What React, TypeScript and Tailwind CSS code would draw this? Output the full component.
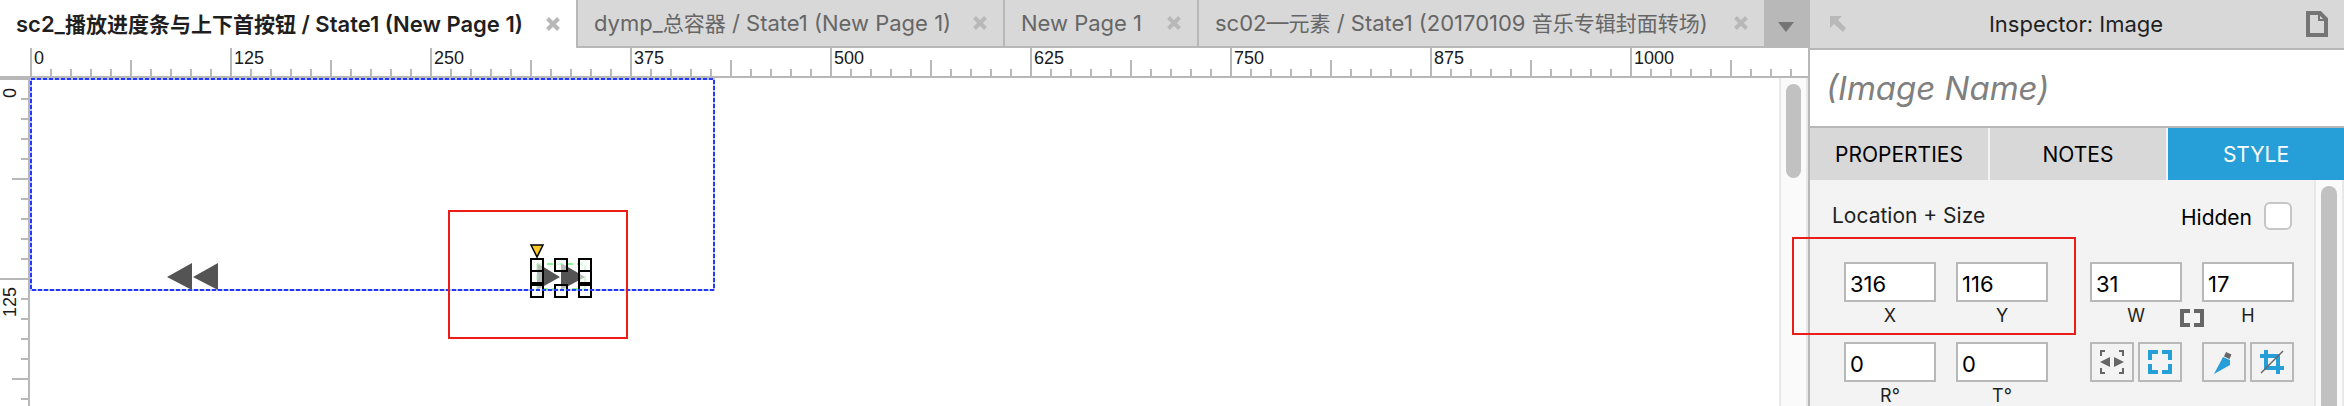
import { useState } from 'react';

const MINOR = 20;
const H_TICKS = Array.from({ length: 89 }, (_, i) => i);
const V_TICKS = Array.from({ length: 17 }, (_, i) => i);

const PAGES = [
  { title: 'sc2_播放进度条与上下首按钮 / State1 (New Page 1)', width: 'w-[576px]' },
  { title: 'dymp_总容器 / State1 (New Page 1)', width: 'w-[427px]' },
  { title: 'New Page 1', width: 'w-[194px]' },
  { title: 'sc02—元素 / State1 (20170109 音乐专辑封面转场)', width: 'w-[567px]' },
];

const INSPECTOR_TABS = ['PROPERTIES', 'NOTES', 'STYLE'];

function CloseIcon() {
  return (
    <svg width="14" height="14" viewBox="0 0 14 14" stroke="#b8b8b8" strokeWidth="4">
      <path d="M1.5 1.5 12.5 12.5M12.5 1.5 1.5 12.5" />
    </svg>
  );
}

// Chinese runs are set one step smaller than the Latin text around them
function MixedText({ text }: { text: string }) {
  return text.split(/([\u4e00-\u9fff]+)/).map((part, i) =>
    i % 2 === 1 ? (
      <span key={i} className="text-[21px]">
        {part}
      </span>
    ) : (
      part
    ),
  );
}

function PageTabs() {
  const [active, setActive] = useState(0);

  return (
    <div className="flex h-12 bg-[#b8b8b8]">
      {PAGES.map((page, i) => (
        <div
          key={page.title}
          className={`flex min-w-0 items-center justify-between pr-4 pl-4 ${page.width} ${
            i === active
              ? 'bg-white font-semibold text-[#1f1f1f]'
              : 'border-b-2 border-l-2 border-[#b8b8b8] bg-[#d8d8d8] text-[#666666]'
          }`}
        >
          <button type="button" className="truncate text-[22px] leading-8" onClick={() => setActive(i)}>
            <MixedText text={page.title} />
          </button>
          <button type="button" aria-label={`Close ${page.title}`} className="shrink-0">
            <CloseIcon />
          </button>
        </div>
      ))}
      <button type="button" aria-label="All pages" className="flex flex-1 items-center justify-center pt-1.5">
        <svg width="16" height="10" viewBox="0 0 16 10">
          <path d="M0 0h16L8 10z" fill="#757575" />
        </svg>
      </button>
    </div>
  );
}

function tickSize(i: number) {
  if (i % 10 === 0) return 28;
  return i % 5 === 0 ? 16 : 7;
}

function TopRuler() {
  return (
    <div className="h-[30px] overflow-hidden border-b-2 border-[#b8b8b8]">
      <svg width="100%" height="28" className="block">
        {H_TICKS.map((i) => (
          <g key={i}>
            <rect x={30 + i * MINOR} y={28 - tickSize(i)} width="2" height={tickSize(i)} fill="#b8b8b8" />
            {i % 10 === 0 && (
              <text x={34 + i * MINOR} y="16" fontSize="18" fill="#1a1a1a">
                {i * 12.5}
              </text>
            )}
          </g>
        ))}
      </svg>
    </div>
  );
}

function SideRuler() {
  return (
    <div className="w-[30px] shrink-0 overflow-hidden border-r-2 border-[#b8b8b8]">
      <svg width="28" height="328" className="block">
        {V_TICKS.map((i) => (
          <g key={i}>
            <rect x={28 - tickSize(i)} y={i * MINOR} width={tickSize(i)} height="2" fill="#b8b8b8" />
            {i % 10 === 0 && (
              <text
                transform={`translate(16 ${i === 0 ? 20 : i * MINOR + 39}) rotate(-90)`}
                fontSize="18"
                fill="#1a1a1a"
              >
                {i * 12.5}
              </text>
            )}
          </g>
        ))}
      </svg>
    </div>
  );
}

function Canvas() {
  return (
    <div className="min-w-0 flex-1 overflow-hidden">
      <svg width="760" height="328" className="block">
        <rect x="1" y="1" width="683" height="211" fill="none" stroke="#b9c0fb" strokeWidth="2" />
        <rect x="1" y="1" width="683" height="211" fill="none" stroke="#2438f8" strokeWidth="2" strokeDasharray="4 2" />
        <path d="M137 199 162 185V212zM163 199 188 185V212z" fill="#545454" />

        {/* selected widget */}
        <path d="M507 185 530 199 507 212z M531 185 555 199 531 212z" fill="#545454" />
        <rect x="507" y="186" width="48" height="25" fill="none" stroke="#1fe82c" strokeDasharray="6 4" />
        <path d="M501 167h12l-6 12z" fill="#fbc926" stroke="#000" strokeWidth="1.5" />
        <g fill="#fff" fillOpacity="0.6" stroke="#000" strokeWidth="2">
          {[501, 525, 549].map((x) => (
            <g key={x}>
              <rect x={x} y="181" width="12" height="12" />
              {x !== 525 && <rect x={x} y="193" width="12" height="12" />}
              <rect x={x} y="207" width="12" height="12" />
            </g>
          ))}
        </g>
        <path d="M500 212H562" stroke="#2438f8" strokeWidth="2" strokeDasharray="4 2" />
        <rect x="419" y="133" width="178" height="127" fill="none" stroke="#ec1c16" strokeWidth="2" />
      </svg>
    </div>
  );
}

function NumberField({ id, label, initial }: { id: string; label: string; initial: string }) {
  const [value, setValue] = useState(initial);

  return (
    <div className="flex w-[92px] flex-col items-center">
      <input
        id={id}
        className="h-10 w-full border-2 border-[#b8b8b8] bg-white pt-1 pl-1 text-[22px] leading-8 text-black outline-none"
        value={value}
        onChange={(e) => setValue(e.target.value)}
      />
      <label htmlFor={id} className="text-lg leading-7 text-[#1f1f1f]">
        {label}
      </label>
    </div>
  );
}

function ToolButton({ label, children }: { label: string; children: React.ReactNode }) {
  return (
    <button
      type="button"
      aria-label={label}
      className="flex h-10 w-11 items-center justify-center border-2 border-[#b8b8b8]"
    >
      {children}
    </button>
  );
}

function StylePanel() {
  return (
    <div className="min-w-0 flex-1 pl-[22px]">
      <div className="flex items-start justify-between pt-5 pr-[22px]">
        <h2 className="pt-[2px] text-[21px] leading-7 text-[#1f1f1f]">Location + Size</h2>
        <label className="flex items-start gap-3 pt-[2px] text-[21px] leading-7 text-black">
          <span className="pt-[2px]">Hidden</span>
          <input
            type="checkbox"
            className="size-7 appearance-none rounded-md border-2 border-[#c6c6c6] bg-white checked:bg-[#269fd8]"
          />
        </label>
      </div>

      <div className="relative mt-[30px] flex pl-3">
        <div className="flex gap-5">
          <NumberField id="x" label="X" initial="316" />
          <NumberField id="y" label="Y" initial="116" />
        </div>
        <div className="ml-[42px] flex">
          <NumberField id="w" label="W" initial="31" />
          <button type="button" aria-label="Lock ratio" className="z-10 -mx-[2px] mt-[47px] h-[18px]">
            <svg width="24" height="18" viewBox="0 0 24 18" fill="none" stroke="#666" strokeWidth="4">
              <path d="M10 2H2V16H10M14 2H22V16H14" />
            </svg>
          </button>
          <NumberField id="h" label="H" initial="17" />
        </div>
        {/* callout around the coordinates */}
        <div className="pointer-events-none absolute -top-[25px] -left-10 h-[98px] w-[284px] border-2 border-[#ec1c16]" />
      </div>

      <div className="mt-3 flex pl-3">
        <div className="flex gap-5">
          <NumberField id="r" label="R°" initial="0" />
          <NumberField id="t" label="T°" initial="0" />
        </div>
        <div className="ml-[42px] flex gap-5">
          <div className="flex gap-1">
            <ToolButton label="Fit width">
              <svg width="24" height="24" viewBox="0 0 24 24">
                <path d="M1 6V1H5M19 1H23V6M1 18V23H5M19 23H23V18" fill="none" stroke="#666" strokeWidth="2" />
                <path d="M0 12 10 7V17zM24 12 14 7V17z" fill="#666" />
              </svg>
            </ToolButton>
            <ToolButton label="Fit to image">
              <svg width="24" height="24" viewBox="0 0 24 24" fill="none" stroke="#269fd8" strokeWidth="4">
                <path d="M2 10V2H10M14 2H22V10M22 14V22H14M10 22H2V14" />
              </svg>
            </ToolButton>
          </div>
          <div className="flex gap-1">
            <ToolButton label="Slice">
              <svg width="24" height="24" viewBox="0 0 24 24">
                <path d="M11 7 18 10V15L2 24z" fill="#269fd8" />
                <path d="M14 2 19.5 4.5 17.5 9 12 6.5z" fill="#666" />
              </svg>
            </ToolButton>
            <ToolButton label="Crop">
              <svg width="24" height="24" viewBox="0 0 24 24" fill="none">
                <path d="M6 0V18H24M0 6H18V24" stroke="#269fd8" strokeWidth="4" />
                <path d="M1 23 23 1" stroke="#666" strokeWidth="1.5" />
              </svg>
            </ToolButton>
          </div>
        </div>
      </div>
    </div>
  );
}

function Inspector() {
  const [tab, setTab] = useState('STYLE');

  return (
    <aside className="flex w-[536px] shrink-0 flex-col border-l-2 border-[#b8b8b8] bg-[#f3f3f3]">
      <header className="flex h-[50px] items-center justify-between border-b-2 border-[#b8b8b8] bg-[#d8d8d8] pr-4 pl-5">
        <svg width="16" height="16" viewBox="0 0 16 16">
          <path d="M0 0H12L8 4 16 12 13 16 4 8 0 12z" fill="#b8b8b8" />
        </svg>
        <h1 className="text-[22px] leading-7 text-[#1f1f1f]">Inspector: Image</h1>
        <svg width="22" height="26" viewBox="0 0 22 26" fill="none" stroke="#757575">
          <path d="M2 2H14L20 8V24H2z" strokeWidth="4" />
          <path d="M13 2V9H20" strokeWidth="2" />
        </svg>
      </header>
      <input
        aria-label="Image name"
        placeholder="(Image Name)"
        className="h-[78px] border-b-2 border-[#b8b8b8] bg-white pl-4 text-[33px] italic outline-none placeholder:text-[#808080]"
      />
      <div className="grid grid-cols-[178fr_176fr_176fr] gap-[2px]">
        {INSPECTOR_TABS.map((name) => (
          <button
            key={name}
            type="button"
            onClick={() => setTab(name)}
            className={`h-[52px] pt-[2px] text-[21px] leading-7 ${
              tab === name ? 'bg-[#269fd8] text-white' : 'bg-[#d8d8d8] text-black'
            }`}
          >
            {name}
          </button>
        ))}
      </div>
      <div className="flex h-[226px] overflow-clip [overflow-clip-margin:20px]">
        <StylePanel />
        <div className="w-[30px] shrink-0 border-x-2 border-[#e8e8e8] bg-[#fafafa] px-[5px] pt-[6px]">
          <div className="h-[220px] rounded-t-full bg-[#c1c1c1]" />
        </div>
      </div>
    </aside>
  );
}

export default function App() {
  return (
    <div
      className="flex overflow-hidden bg-white"
      style={{ fontFamily: 'Inter, "Noto Sans CJK SC", sans-serif' }}
    >
      <main className="min-w-0 flex-1">
        <PageTabs />
        <div className="font-['Liberation_Sans',sans-serif]">
          <TopRuler />
          <div className="flex h-[328px]">
            <SideRuler />
            <Canvas />
            <div className="w-[29px] shrink-0 border-x-2 border-[#e8e8e8] bg-[#fafafa] px-[5px] pt-[6px]">
              <div className="h-[94px] rounded-full bg-[#c1c1c1]" />
            </div>
          </div>
        </div>
      </main>
      <Inspector />
    </div>
  );
}
